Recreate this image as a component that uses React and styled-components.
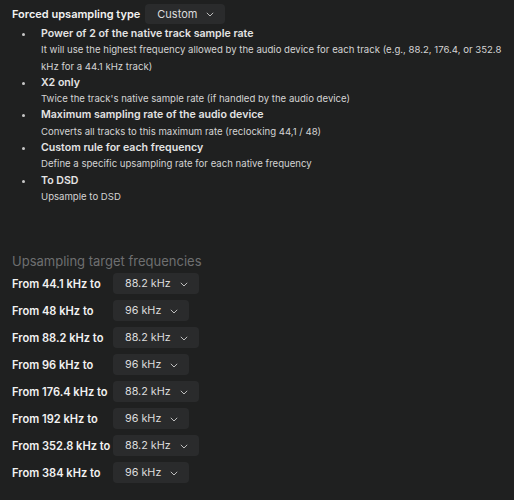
import React from "react";
import styled, { createGlobalStyle } from "styled-components";

const GlobalStyle = createGlobalStyle`
  body {
    margin: 0;
    background: #1f2020;
    font-family: Inter, "Noto Sans", sans-serif;
    color: #e6e6e6;
  }
`;

const modes = [
  {
    title: "Power of 2 of the native track sample rate",
    text: "It will use the highest frequency allowed by the audio device for each track (e.g., 88.2, 176.4, or 352.8 kHz for a 44.1 kHz track)",
  },
  { title: "X2 only", text: "Twice the track's native sample rate (if handled by the audio device)" },
  {
    title: "Maximum sampling rate of the audio device",
    text: "Converts all tracks to this maximum rate (reclocking 44,1 / 48)",
  },
  {
    title: "Custom rule for each frequency",
    text: "Define a specific upsampling rate for each native frequency",
  },
  { title: "To DSD", text: "Upsample to DSD" },
];

const rules = [
  ["44.1", "88.2 kHz"],
  ["48", "96 kHz"],
  ["88.2", "88.2 kHz"],
  ["96", "96 kHz"],
  ["176.4", "88.2 kHz"],
  ["192", "96 kHz"],
  ["352.8", "88.2 kHz"],
  ["384", "96 kHz"],
];

const Chevron = () => (
  <svg width="8" height="5" viewBox="0 0 8 5" fill="none">
    <path d="M0.8 0.8 L4 4 L7.2 0.8" stroke="#bdbdbd" strokeWidth="1" />
  </svg>
);

const Select = ({ value, big }) => (
  <SelectBox $big={big}>
    <span>{value}</span>
    <Chevron />
  </SelectBox>
);

const App = () => (
  <Page>
    <GlobalStyle />
    <Header>
      <Title>Forced upsampling type</Title>
      <Select value="Custom" big />
    </Header>
    <List>
      {modes.map((m) => (
        <Item key={m.title}>
          <Bullet />
          <div>
            <ItemTitle>{m.title}</ItemTitle>
            <ItemText>{m.text}</ItemText>
          </div>
        </Item>
      ))}
    </List>
    <Section>
      <SectionTitle>Upsampling target frequencies</SectionTitle>
      {rules.map(([from, to]) => (
        <Rule key={from}>
          <RuleLabel>From {from} kHz to</RuleLabel>
          <Select value={to} />
        </Rule>
      ))}
    </Section>
  </Page>
);

const Page = styled.div`
  padding: 4px 4px 4px 12px;
`;

const Header = styled.div`
  display: flex;
  align-items: center;
  gap: 5px;
`;

const Title = styled.div`
  font-size: 11px;
  font-weight: 600;
  color: #f2f2f2;
`;

const SelectBox = styled.div`
  display: flex;
  align-items: center;
  gap: 9px;
  height: ${({ $big }) => ($big ? "20px" : "21px")};
  padding: 0 11px 0 12px;
  border-radius: 4px;
  background: #2a2b2c;
  color: #dcdcdc;
  font-size: ${({ $big }) => ($big ? "11px" : "10.8px")};

  svg {
    margin-top: 1px;
  }
`;

const List = styled.ul`
  margin: 2px 0 0;
  padding: 0 0 0 10px;
  list-style: none;
  font-size: 9.6px;
  line-height: 16.3px;
`;

const Item = styled.li`
  display: grid;
  grid-template-columns: 19px 1fr;
`;

const Bullet = styled.span`
  width: 3px;
  height: 3px;
  margin-top: 7px;
  border-radius: 50%;
  background: #c8c8c8;
`;

const ItemTitle = styled.div`
  font-weight: 600;
  font-size: 10.6px;
  color: #e4e4e4;
`;

const ItemText = styled.div`
  color: #d4d4d4;
`;

const Section = styled.div`
  margin-top: 48px;
  display: flex;
  flex-direction: column;
  gap: 6px;
`;

const SectionTitle = styled.div`
  font-size: 13px;
  color: #6e6f70;
  line-height: 16px;
  margin-bottom: -2px;
`;

const Rule = styled.div`
  display: flex;
  align-items: center;
`;

const RuleLabel = styled.div`
  width: 101px;
  font-size: 11.1px;
  font-weight: 600;
  color: #f2f2f2;
`;

export default App;
